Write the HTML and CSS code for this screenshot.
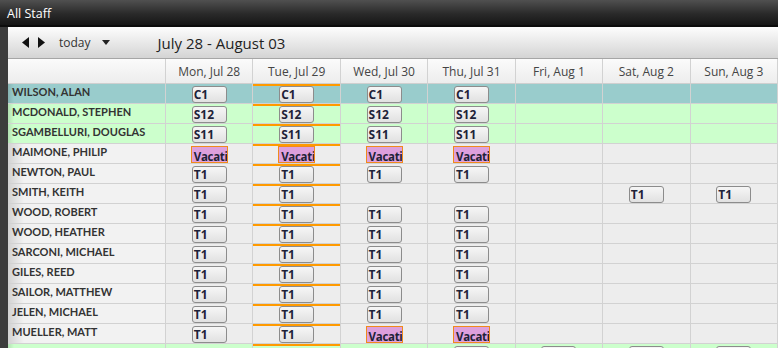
FILE: index.html
```html
<!DOCTYPE html>
<html lang="en">
<head>
    <meta charset="UTF-8">
    <title>All Staff</title>
    <link rel="stylesheet" href="styles.css">
</head>
<body>
    <div class="titlebar">All Staff</div>
    <div class="frame">
        <div class="panel">
            <div class="toolbar">
                <div class="arrows">
                    <svg width="8" height="11" viewBox="0 0 8 11"><path d="M7 0 L0 5.5 L7 11 Z" fill="#111"/></svg>
                    <svg width="8" height="11" viewBox="0 0 8 11"><path d="M1 0 L8 5.5 L1 11 Z" fill="#111"/></svg>
                </div>
                <div class="today-btn">today</div>
                <svg class="drop" width="8" height="5" viewBox="0 0 8 5"><path d="M0 0 L8 0 L4 5 Z" fill="#222"/></svg>
                <div class="range">July 28 - August 03</div>
            </div>

            <div class="grid">
                <div class="row head">
                    <div class="cell name"></div>
                    <div class="cell">Mon, Jul 28</div>
                    <div class="cell">Tue, Jul 29</div>
                    <div class="cell">Wed, Jul 30</div>
                    <div class="cell">Thu, Jul 31</div>
                    <div class="cell">Fri, Aug 1</div>
                    <div class="cell">Sat, Aug 2</div>
                    <div class="cell">Sun, Aug 3</div>
                </div>

                <div class="row teal">
                    <div class="cell name">WILSON, ALAN</div>
                    <div class="cell"><span class="badge">C1</span></div>
                    <div class="cell today"><span class="badge">C1</span></div>
                    <div class="cell"><span class="badge">C1</span></div>
                    <div class="cell"><span class="badge">C1</span></div>
                    <div class="cell"></div>
                    <div class="cell"></div>
                    <div class="cell"></div>
                </div>

                <div class="row green">
                    <div class="cell name">MCDONALD, STEPHEN</div>
                    <div class="cell"><span class="badge">S12</span></div>
                    <div class="cell today"><span class="badge">S12</span></div>
                    <div class="cell"><span class="badge">S12</span></div>
                    <div class="cell"><span class="badge">S12</span></div>
                    <div class="cell"></div>
                    <div class="cell"></div>
                    <div class="cell"></div>
                </div>

                <div class="row green">
                    <div class="cell name">SGAMBELLURI, DOUGLAS</div>
                    <div class="cell"><span class="badge">S11</span></div>
                    <div class="cell today"><span class="badge">S11</span></div>
                    <div class="cell"><span class="badge">S11</span></div>
                    <div class="cell"><span class="badge">S11</span></div>
                    <div class="cell"></div>
                    <div class="cell"></div>
                    <div class="cell"></div>
                </div>

                <div class="row">
                    <div class="cell name">MAIMONE, PHILIP</div>
                    <div class="cell"><span class="badge vac">Vacati</span></div>
                    <div class="cell today"><span class="badge vac">Vacati</span></div>
                    <div class="cell"><span class="badge vac">Vacati</span></div>
                    <div class="cell"><span class="badge vac">Vacati</span></div>
                    <div class="cell"></div>
                    <div class="cell"></div>
                    <div class="cell"></div>
                </div>

                <div class="row">
                    <div class="cell name">NEWTON, PAUL</div>
                    <div class="cell"><span class="badge">T1</span></div>
                    <div class="cell today"><span class="badge">T1</span></div>
                    <div class="cell"><span class="badge">T1</span></div>
                    <div class="cell"><span class="badge">T1</span></div>
                    <div class="cell"></div>
                    <div class="cell"></div>
                    <div class="cell"></div>
                </div>

                <div class="row">
                    <div class="cell name">SMITH, KEITH</div>
                    <div class="cell"><span class="badge">T1</span></div>
                    <div class="cell today"><span class="badge">T1</span></div>
                    <div class="cell"></div>
                    <div class="cell"></div>
                    <div class="cell"></div>
                    <div class="cell"><span class="badge">T1</span></div>
                    <div class="cell"><span class="badge">T1</span></div>
                </div>

                <div class="row">
                    <div class="cell name">WOOD, ROBERT</div>
                    <div class="cell"><span class="badge">T1</span></div>
                    <div class="cell today"><span class="badge">T1</span></div>
                    <div class="cell"><span class="badge">T1</span></div>
                    <div class="cell"><span class="badge">T1</span></div>
                    <div class="cell"></div>
                    <div class="cell"></div>
                    <div class="cell"></div>
                </div>

                <div class="row">
                    <div class="cell name">WOOD, HEATHER</div>
                    <div class="cell"><span class="badge">T1</span></div>
                    <div class="cell today"><span class="badge">T1</span></div>
                    <div class="cell"><span class="badge">T1</span></div>
                    <div class="cell"><span class="badge">T1</span></div>
                    <div class="cell"></div>
                    <div class="cell"></div>
                    <div class="cell"></div>
                </div>

                <div class="row">
                    <div class="cell name">SARCONI, MICHAEL</div>
                    <div class="cell"><span class="badge">T1</span></div>
                    <div class="cell today"><span class="badge">T1</span></div>
                    <div class="cell"><span class="badge">T1</span></div>
                    <div class="cell"><span class="badge">T1</span></div>
                    <div class="cell"></div>
                    <div class="cell"></div>
                    <div class="cell"></div>
                </div>

                <div class="row">
                    <div class="cell name">GILES, REED</div>
                    <div class="cell"><span class="badge">T1</span></div>
                    <div class="cell today"><span class="badge">T1</span></div>
                    <div class="cell"><span class="badge">T1</span></div>
                    <div class="cell"><span class="badge">T1</span></div>
                    <div class="cell"></div>
                    <div class="cell"></div>
                    <div class="cell"></div>
                </div>

                <div class="row">
                    <div class="cell name">SAILOR, MATTHEW</div>
                    <div class="cell"><span class="badge">T1</span></div>
                    <div class="cell today"><span class="badge">T1</span></div>
                    <div class="cell"><span class="badge">T1</span></div>
                    <div class="cell"><span class="badge">T1</span></div>
                    <div class="cell"></div>
                    <div class="cell"></div>
                    <div class="cell"></div>
                </div>

                <div class="row">
                    <div class="cell name">JELEN, MICHAEL</div>
                    <div class="cell"><span class="badge">T1</span></div>
                    <div class="cell today"><span class="badge">T1</span></div>
                    <div class="cell"><span class="badge">T1</span></div>
                    <div class="cell"><span class="badge">T1</span></div>
                    <div class="cell"></div>
                    <div class="cell"></div>
                    <div class="cell"></div>
                </div>

                <div class="row">
                    <div class="cell name">MUELLER, MATT</div>
                    <div class="cell"><span class="badge">T1</span></div>
                    <div class="cell today"><span class="badge">T1</span></div>
                    <div class="cell"><span class="badge vac">Vacati</span></div>
                    <div class="cell"><span class="badge vac">Vacati</span></div>
                    <div class="cell"></div>
                    <div class="cell"></div>
                    <div class="cell"></div>
                </div>

                <div class="row green">
                    <div class="cell name"></div>
                    <div class="cell"></div>
                    <div class="cell today"></div>
                    <div class="cell"></div>
                    <div class="cell"><span class="badge"></span></div>
                    <div class="cell"><span class="badge"></span></div>
                    <div class="cell"><span class="badge"></span></div>
                    <div class="cell"><span class="badge"></span></div>
                </div>
            </div>
        </div>
    </div>
</body>
</html>
```

FILE: styles.css
```css
* {
    box-sizing: border-box;
}
body {
    margin: 0;
    width: 778px;
    height: 348px;
    overflow: hidden;
    background-color: #3c3c3c;
    font-family: "Open Sans", "Noto Sans", sans-serif;
}
.titlebar {
    height: 27px;
    padding: 5px 0 0 7px;
    background: linear-gradient(#505050, #2a2a2a 55%, #161616);
    border-bottom: 2px solid #0c0c0c;
    color: #fff;
    font-size: 12.5px;
}
.frame {
    padding-left: 8px;
}
.panel {
    background-color: #ededed;
}
.toolbar {
    height: 32px;
    display: flex;
    align-items: center;
    background: linear-gradient(#fdfdfd, #d4d4d4);
    border-bottom: 1px solid #a6a6a6;
}
.arrows {
    display: flex;
    gap: 7px;
    margin-left: 14px;
}
.today-btn {
    margin-left: 14px;
    font-size: 12px;
    color: #333;
}
.drop {
    margin-left: 11px;
}
.range {
    margin-left: 48px;
    font-size: 15px;
    color: #222;
}
.row {
    display: grid;
    grid-template-columns: 158px repeat(7, 1fr);
    height: 20px;
}
.cell {
    border-right: 1px solid #d2d2d2;
    border-bottom: 1px solid #d2d2d2;
    display: flex;
    justify-content: center;
    align-items: flex-start;
    padding-top: 2px;
    overflow: hidden;
}
.cell.name {
    justify-content: flex-start;
    padding: 0 0 0 4px;
    font-family: Lato, "Open Sans", sans-serif;
    font-size: 11px;
    line-height: 15px;
    font-weight: bold;
    color: #333;
    background: linear-gradient(to right, #d2d2d2, #f2f2f2 16px);
}
.row.head {
    height: 25px;
    background: linear-gradient(#fbfbfb, #ececec);
}
.row.head .cell {
    align-items: center;
    padding: 0;
    font-size: 12px;
    color: #444;
    border-bottom-color: #cfcfcf;
}
.row.head .cell.name {
    background: transparent;
}
.row.teal {
    background-color: #99cccc;
}
.row.green {
    background-color: #ccffcc;
}
.row.teal .cell.name,
.row.green .cell.name {
    background: linear-gradient(to right, rgba(0, 0, 0, 0.12), rgba(0, 0, 0, 0) 6px);
}
.cell.today {
    box-shadow: inset 0 2px 0 #ff9a00;
}
.badge {
    width: 35px;
    height: 17px;
    padding-left: 1px;
    border: 1px solid #8c8c8c;
    border-radius: 3px;
    background: linear-gradient(#f6f6f6, #e1e1e1);
    font-size: 12px;
    line-height: 16px;
    font-weight: bold;
    color: #1e2238;
    white-space: nowrap;
    overflow: hidden;
}
.badge.vac {
    width: 37px;
    padding-left: 2px;
    border-color: #f08a1c;
    border-radius: 0;
    background: #dda0dd;
    font-size: 11.5px;
    line-height: 19px;
    letter-spacing: -0.3px;
}
```
